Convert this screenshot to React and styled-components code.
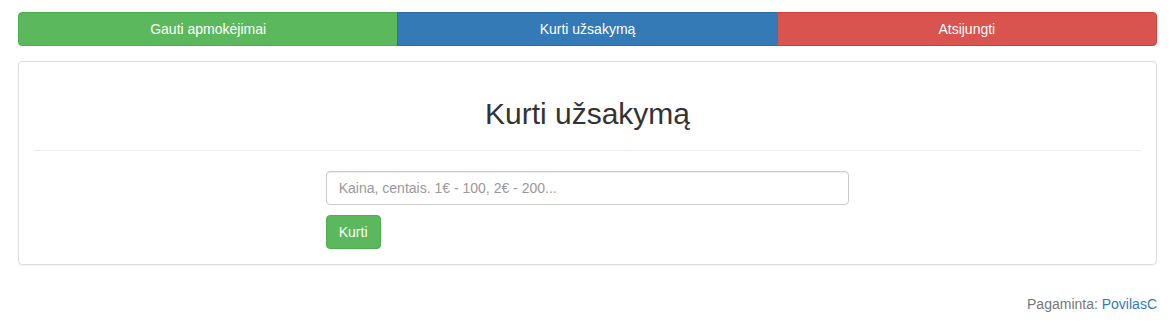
import React from "react";
import styled, { createGlobalStyle } from "styled-components";

const Global = createGlobalStyle`
  html, body { margin: 0; padding: 0; background: #fff; }
  body {
    font-family: "Liberation Sans", Arial, Helvetica, sans-serif;
    font-size: 14px;
    line-height: 1.42857143;
    color: #333;
  }
  * { box-sizing: border-box; }
`;

const Page = styled.div`
  padding: 12px 17px 0 18px;
`;

const ButtonGroup = styled.div`
  display: flex;
  margin-bottom: 15px;
`;

const variants = {
  success: { bg: "#5cb85c", border: "#4cae4c" },
  primary: { bg: "#337ab7", border: "#2e6da4" },
  danger: { bg: "#d9534f", border: "#d43f3a" },
};

const NavButton = styled.a`
  flex: 1 1 0;
  display: block;
  text-align: center;
  padding: 6px 12px;
  font-size: 14px;
  line-height: 20px;
  color: #fff;
  text-decoration: none;
  background: ${(p) => variants[p.$variant].bg};
  border: 1px solid ${(p) => variants[p.$variant].border};
  border-radius: 0;
  &:first-child { border-radius: 4px 0 0 4px; }
  &:last-child { border-radius: 0 4px 4px 0; }
  & + & { margin-left: -1px; }
`;

const Panel = styled.div`
  border: 1px solid #ddd;
  border-radius: 4px;
  box-shadow: 0 1px 1px rgba(0, 0, 0, 0.05);
  padding: 15px;
  margin-bottom: 20px;
`;

const Title = styled.h2`
  font-family: inherit;
  font-weight: 500;
  font-size: 30px;
  line-height: 1.1;
  margin: 20px 0 10px;
  text-align: center;
  color: #333;
`;

const Rule = styled.hr`
  margin: 20px 0;
  border: 0;
  border-top: 1px solid #eee;
`;

const FormCol = styled.div`
  width: 50%;
  margin-left: 25%;
  padding: 0 15px;
`;

const Input = styled.input`
  display: block;
  width: 100%;
  height: 34px;
  padding: 6px 12px;
  font-family: inherit;
  font-size: 14px;
  line-height: 1.42857143;
  color: #555;
  background: #fff;
  border: 1px solid #ccc;
  border-radius: 4px;
  box-shadow: inset 0 1px 1px rgba(0, 0, 0, 0.075);
  outline: none;
  &::placeholder { color: #999; }
`;

const SubmitButton = styled.button`
  display: inline-block;
  margin-top: 10px;
  padding: 6px 12px;
  font-family: inherit;
  font-size: 14px;
  line-height: 20px;
  color: #fff;
  background: #5cb85c;
  border: 1px solid #4cae4c;
  border-radius: 4px;
  cursor: pointer;
`;

const Footer = styled.div`
  text-align: right;
  padding-top: 9px;
  color: #777;
`;

const Link = styled.a`
  color: #337ab7;
  text-decoration: none;
`;

export default function App() {
  return (
    <>
      <Global />
      <Page>
        <ButtonGroup>
          <NavButton $variant="success" href="#">Gauti apmokėjimai</NavButton>
          <NavButton $variant="primary" href="#">Kurti užsakymą</NavButton>
          <NavButton $variant="danger" href="#">Atsijungti</NavButton>
        </ButtonGroup>
        <Panel>
          <Title>Kurti užsakymą</Title>
          <Rule />
          <FormCol>
            <Input placeholder="Kaina, centais. 1€ - 100, 2€ - 200..." />
            <SubmitButton>Kurti</SubmitButton>
          </FormCol>
        </Panel>
        <Footer>
          Pagaminta: <Link href="#">PovilasC</Link>
        </Footer>
      </Page>
    </>
  );
}
